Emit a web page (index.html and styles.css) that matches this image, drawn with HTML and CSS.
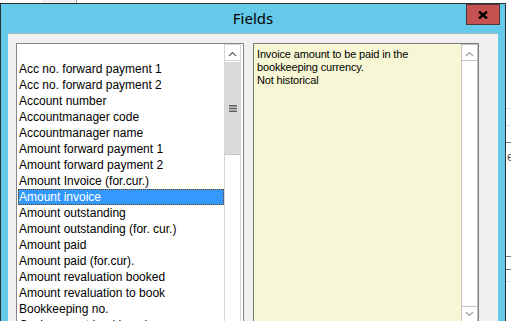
FILE: index.html
```html
<!DOCTYPE html>
<html>
<head>
<meta charset="utf-8">
<title>Fields</title>
<link rel="stylesheet" href="styles.css">
</head>
<body>
<div class="screen">
  <div class="strip">
    <span class="seg seg-white"></span>
    <span class="seg seg-gray"></span>
    <span class="seg seg-rest"></span>
  </div>
  <div class="main">
    <div class="dialog">
      <div class="titlebar">
        <span></span>
        <span class="title">Fields</span>
        <div class="close">
          <svg width="10" height="8" viewBox="0 0 10 8"><path d="M1 0.5 L9 7.5 M9 0.5 L1 7.5" stroke="#000" stroke-width="2.4" fill="none"/></svg>
        </div>
      </div>
      <div class="client">
        <div class="listbox">
          <ul class="items">
            <li class="item">&nbsp;</li>
            <li class="item">Acc no. forward payment 1</li>
            <li class="item">Acc no. forward payment 2</li>
            <li class="item">Account number</li>
            <li class="item">Accountmanager code</li>
            <li class="item">Accountmanager name</li>
            <li class="item">Amount forward payment 1</li>
            <li class="item">Amount forward payment 2</li>
            <li class="item">Amount Invoice (for.cur.)</li>
            <li class="item selected">Amount invoice</li>
            <li class="item">Amount outstanding</li>
            <li class="item">Amount outstanding (for. cur.)</li>
            <li class="item">Amount paid</li>
            <li class="item">Amount paid (for.cur).</li>
            <li class="item">Amount revaluation booked</li>
            <li class="item">Amount revaluation to book</li>
            <li class="item">Bookkeeping no.</li>
            <li class="item">Cashaccount bookkeeping</li>
          </ul>
          <div class="vscroll">
            <div class="arrow">
              <svg width="9" height="6" viewBox="0 0 9 6"><path d="M1 5 L4.5 1.5 L8 5" stroke="#606060" stroke-width="1.2" fill="none"/></svg>
            </div>
            <div class="thumb">
              <svg width="8" height="7" viewBox="0 0 8 7"><path d="M0 0.75 H8 M0 3.5 H8 M0 6.25 H8" stroke="#606060" stroke-width="1.5"/></svg>
            </div>
            <div class="track"></div>
          </div>
        </div>
        <div class="desc">
          <div class="desc-text">Invoice amount to be paid in the<br>bookkeeping currency.<br>Not historical</div>
          <div class="vscroll plain">
            <div class="arrow">
              <svg width="9" height="6" viewBox="0 0 9 6"><path d="M1 5 L4.5 1.5 L8 5" stroke="#a0a0a0" stroke-width="1.2" fill="none"/></svg>
            </div>
            <div class="track"></div>
            <div class="arrow down">
              <svg width="9" height="6" viewBox="0 0 9 6"><path d="M1 1 L4.5 4.5 L8 1" stroke="#a0a0a0" stroke-width="1.2" fill="none"/></svg>
            </div>
          </div>
        </div>
      </div>
    </div>
    <div class="outside">
      <div class="o-row o-h103 o-light"></div>
      <div class="o-row o-h17 o-light"></div>
      <div class="o-row o-h17 o-dark"></div>
      <div class="o-row o-h113"><span class="o-text">e</span></div>
      <div class="o-row o-h13 o-dark"></div>
      <div class="o-row o-h12 o-light"></div>
    </div>
  </div>
</div>
</body>
</html>
```

FILE: styles.css
```css
* { box-sizing: border-box; }
html, body { margin: 0; padding: 0; }
body { background: #fff; font-family: "Liberation Sans", Arial, sans-serif; }

.screen { width: 511px; height: 321px; overflow: hidden; display: flex; flex-direction: column; }

.strip { height: 3px; display: flex; flex: none; }
.seg { display: block; height: 3px; }
.seg-white { width: 42px; background: #fbfbfb; }
.seg-gray { width: 34px; background: #f0f0f0; border-right: 1px solid #a6a6a6; width: 35px; }
.seg-rest { flex: 1; background: #fff; }

.main { flex: 1; display: flex; min-height: 0; }

.dialog {
  width: 506px; flex: none;
  background: #65c9e9;
  border: 1px solid #2e2e2e; border-bottom: none;
  display: flex; flex-direction: column;
}

.titlebar {
  height: 29px; flex: none;
  display: grid; grid-template-columns: 1fr auto 1fr;
}
.title {
  font-family: "Noto Sans", "Open Sans", sans-serif;
  font-size: 15px; line-height: 28px; color: #000;
}
.close {
  justify-self: end; align-self: start;
  width: 34px; height: 21px; margin-right: 5px;
  background: #c75050; border: 1px solid #4a3a3a;
  display: flex; align-items: center; justify-content: center;
  padding-top: 1px;
}

.client {
  flex: 1; margin: 0 7px;
  background: #f0f0f0; border-top: 1px solid #a9b3b8;
  padding: 9px 19px 0 8px;
  display: flex; gap: 9px; align-items: flex-start;
}

.listbox {
  width: 228px; height: 281px; flex: none;
  background: #fff; border: 1px solid #828790;
  display: flex; padding-right: 2px;
}
.items { list-style: none; margin: 0; padding: 1px 0 0 1px; flex: 1; overflow: hidden; }
.item {
  height: 16px; line-height: 14px; font-size: 12px;
  border: 1px solid transparent; padding-left: 0;
  color: #000; white-space: nowrap; overflow: hidden;
}
.item.selected { background: #3399ff; color: #fff; border: 1px dotted #6b3a10; }

.vscroll {
  width: 17px; flex: none;
  border-left: 1px solid #d6d6d6; border-right: 1px solid #d6d6d6;
  display: flex; flex-direction: column; background: #fff;
}
.arrow {
  height: 17px; flex: none; background: #fff;
  border-top: 1px solid #d6d6d6; border-bottom: 1px solid #d6d6d6;
  display: flex; align-items: center; justify-content: center; padding-top: 3px;
}
.arrow.down { padding-top: 0; padding-bottom: 1px; }
.thumb {
  height: 93px; flex: none; margin-top: 1px;
  background: #dadada; border-bottom: 1px solid #c8c8c8;
  display: flex; align-items: center; justify-content: center;
}
.track { flex: 1; }

.desc {
  width: 226px; height: 281px; flex: none;
  background: #f7f7d5; border: 1px solid #7a7a7a;
  display: flex;
}
.desc-text {
  flex: 1; padding: 4px 0 0 3px;
  font-size: 11px; line-height: 13px; letter-spacing: -0.15px; color: #000;
}
.vscroll.plain { border-color: #c4c4c4; margin-top: 0; }
.vscroll.plain .arrow { border-color: #c4c4c4; }

.outside { flex: 1; background: #fff; display: flex; flex-direction: column; overflow: hidden; }
.o-row { flex: none; border-bottom: 1px solid transparent; }
.o-light { border-bottom-color: #e2e2e2; }
.o-dark { border-bottom-color: #7f7f7f; }
.o-h103 { height: 106px; }
.o-h17 { height: 17px; }
.o-h113 { height: 114px; border-bottom-color: #7f7f7f; }
.o-h13 { height: 13px; }
.o-h12 { height: 12px; }
.o-text { display: block; font-size: 12px; line-height: 12px; margin-top: 8px; margin-left: 1px; color: #555; }
```
